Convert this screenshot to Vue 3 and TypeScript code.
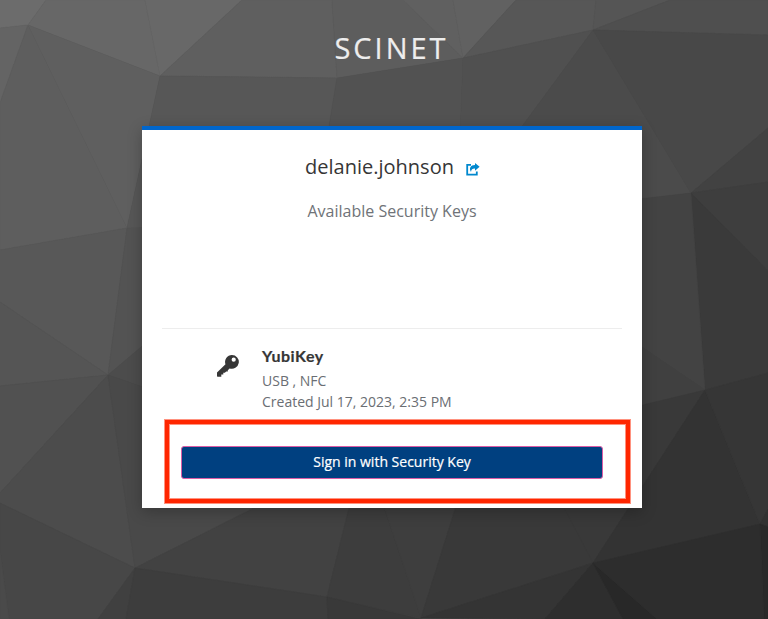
<script setup lang="ts">
interface Facet {
  points: string
  fill: string
}

const facets: Facet[] = [
  { points: '0,0 46,0 28,25 0,28', fill: '#6c6c6c' },
  { points: '0,28 28,25 0,103', fill: '#646464' },
  { points: '46,0 145,0 160,76 28,25', fill: '#676767' },
  { points: '145,0 242,0 160,76', fill: '#686868' },
  { points: '0,103 28,25 127,228 0,250', fill: '#5e5e5e' },
  { points: '28,25 160,76 127,228', fill: '#5f5f5f' },
  { points: '242,0 332,0 337,78 160,76', fill: '#5f5f5f' },
  { points: '332,0 403,0 463,58 337,78', fill: '#5d5d5d' },
  { points: '403,0 453,0 463,58', fill: '#606060' },
  { points: '453,0 516,0 463,58', fill: '#616161' },
  { points: '516,0 596,0 593,30 463,58', fill: '#575757' },
  { points: '596,0 670,0 593,30', fill: '#555555' },
  { points: '670,0 768,0 768,35 593,30', fill: '#4f4f4f' },
  { points: '160,76 337,78 300,300 127,228', fill: '#575757' },
  { points: '337,78 463,58 460,140 327,140', fill: '#525252' },
  { points: '463,58 593,30 512,140 460,140', fill: '#505050' },
  { points: '593,30 691,193 600,205 512,140', fill: '#4b4b4b' },
  { points: '593,30 768,35 768,128 691,193', fill: '#484848' },
  { points: '768,128 768,182 691,193', fill: '#424242' },
  { points: '691,193 768,182 768,271', fill: '#3e3e3e' },
  { points: '691,193 768,271 768,373 705,390', fill: '#3a3a3a' },
  { points: '630,200 691,193 705,390 630,339', fill: '#434343' },
  { points: '630,339 705,390 630,408', fill: '#404040' },
  { points: '0,250 127,228 108,375 0,302', fill: '#585858' },
  { points: '0,302 108,375 0,386', fill: '#555555' },
  { points: '127,228 160,227 160,331 108,375', fill: '#535353' },
  { points: '0,386 108,375 0,493', fill: '#515151' },
  { points: '108,375 160,331 160,393', fill: '#4c4c4c' },
  { points: '0,493 108,375 135,568 0,503', fill: '#4c4c4c' },
  { points: '108,375 160,393 270,500 135,568', fill: '#494949' },
  { points: '0,503 135,568 98,619 9,619 0,551', fill: '#474747' },
  { points: '0,551 9,619 0,619', fill: '#4a4a4a' },
  { points: '135,568 270,500 351,500 327,597', fill: '#424242' },
  { points: '135,568 126,619 98,619', fill: '#404040' },
  { points: '135,568 327,597 328,619 126,619', fill: '#3d3d3d' },
  { points: '351,500 382,500 421,618 327,597', fill: '#3d3d3d' },
  { points: '382,500 458,500 421,618', fill: '#3e3e3e' },
  { points: '327,597 421,619 328,619', fill: '#393939' },
  { points: '458,500 630,500 593,563 421,618', fill: '#393939' },
  { points: '630,408 705,390 593,563 560,500', fill: '#393939' },
  { points: '705,390 760,524 593,563', fill: '#333333' },
  { points: '705,390 768,373 768,509 760,524', fill: '#363636' },
  { points: '768,509 768,527 760,524', fill: '#313131' },
  { points: '760,524 768,527 768,619 764,619', fill: '#292929' },
  { points: '421,618 593,563 545,619', fill: '#343434' },
  { points: '593,563 623,619 545,619', fill: '#2e2e2e' },
  { points: '593,563 657,619 623,619', fill: '#282828' },
  { points: '593,563 760,524 764,619 657,619', fill: '#2d2d2d' },
]

const username = 'delanie.johnson'
const securityKey = {
  label: 'YubiKey',
  transports: 'USB , NFC',
  created: 'Created Jul 17, 2023, 2:35 PM',
}
</script>

<template>
  <div class="page">
    <svg class="backdrop" viewBox="0 0 768 619" aria-hidden="true">
      <polygon
        v-for="facet in facets"
        :key="facet.points"
        :points="facet.points"
        :fill="facet.fill"
        :stroke="facet.fill"
        stroke-width="0.5"
      />
    </svg>
    <header class="realm">SCINET</header>
    <main class="card">
      <div class="user">
        <span class="username">{{ username }}</span>
        <a class="restart" href="#" aria-label="Restart login">
          <svg viewBox="0 0 14 13" width="14" height="13">
            <path d="M5 1.900H1.200v9.700h9.600V8.400" fill="none" stroke="currentColor" stroke-width="1.800" />
            <path d="M9 0l4.600 3.800L9 7.800V5.600C6.600 5.500 5.300 6.400 5 8.900 2.600 5.500 4.500 2.100 9 2.100z" fill="currentColor" />
          </svg>
        </a>
      </div>
      <p class="subtitle">Available Security Keys</p>
      <section class="key">
        <svg class="key-icon" viewBox="0 0 22 22" width="22" height="22" aria-hidden="true">
          <path
            fill="currentColor"
            fill-rule="evenodd"
            d="M14.900 0a6.900 6.900 0 1 1-2.300 13.400L10.800 15.300V16.400H9.200L7.800 17.800H6.300V19.500H4.300V21.700H.600Q0 21.700 0 21.100V17.500L8.500 9.300A6.900 6.900 0 0 1 14.900 0zM16.700 2.600a2.100 2.100 0 1 0 0 4.200 2.100 2.100 0 1 0 0-4.200z"
          />
        </svg>
        <div class="details">
          <strong class="label">{{ securityKey.label }}</strong>
          <span>{{ securityKey.transports }}</span>
          <span>{{ securityKey.created }}</span>
        </div>
      </section>
      <button class="sign-in" type="button">Sign in with Security Key</button>
      <div class="highlight"></div>
    </main>
  </div>
</template>

<style>
body {
  overflow: hidden;
}
</style>

<style scoped>
.page {
  position: relative;
  box-sizing: border-box;
  height: 619px;
  overflow: hidden;
  padding: 24px 126px 0 142px;
  background: #444;
  font-family: 'Open Sans', 'Noto Sans', sans-serif;
  color: #363636;
}
.backdrop {
  position: absolute;
  inset: 0;
  width: 768px;
  height: 619px;
}
.realm {
  position: relative;
  height: 102px;
  padding-right: 1px;
  line-height: 48px;
  font-size: 29px;
  letter-spacing: 3px;
  text-align: center;
  color: #ededed;
  -webkit-text-stroke: 0.2px #ededed;
}
.card {
  position: relative;
  box-sizing: border-box;
  width: 500px;
  height: 382px;
  padding: 22px 20px 0;
  border-top: 4px solid #06c;
  background: #fff;
  box-shadow: 0 4px 14px rgba(0, 0, 0, 0.24);
}
.user {
  display: flex;
  justify-content: center;
  gap: 12px;
  height: 30px;
  padding-left: 1px;
  line-height: 30px;
  font-size: 20px;
}
.restart {
  padding-top: 11px;
  line-height: 0;
  color: #0088ce;
}
.subtitle {
  height: 24px;
  margin: 17px 0 105px;
  line-height: 24px;
  font-size: 16px;
  text-align: center;
  color: #6f7378;
}
.key {
  display: flex;
  gap: 23px;
  height: 117px;
  padding: 17px 0 0 55px;
  box-sizing: border-box;
  border-top: 1px solid #ededed;
}
.key-icon {
  flex: none;
  margin-top: 9px;
}
.details {
  display: flex;
  flex-direction: column;
  font-size: 14px;
  line-height: 21px;
  color: #6a6e73;
}
.label {
  height: 24px;
  line-height: 20px;
  font-family: Lato, sans-serif;
  font-size: 16px;
  font-weight: 700;
  letter-spacing: 0.5px;
  color: #363636;
  -webkit-text-stroke: 0.2px #363636;
}
.sign-in {
  display: block;
  box-sizing: border-box;
  width: 422px;
  height: 33px;
  margin: 1px 0 0 19px;
  padding: 0 0 2px;
  border: 1px solid #dc5ca6;
  border-radius: 3px;
  background: #004080;
  color: #fff;
  font: 14px/29px 'Open Sans', 'Noto Sans', sans-serif;
  -webkit-text-stroke: 0.2px #fff;
}
.highlight {
  position: absolute;
  box-sizing: border-box;
  top: 290px;
  left: 23px;
  width: 465px;
  height: 83px;
  border: 4px solid #ff2600;
  box-shadow:
    0 0 0 1px rgba(255, 38, 0, 0.5),
    inset 0 0 0 1px rgba(255, 38, 0, 0.5);
  pointer-events: none;
}
</style>
